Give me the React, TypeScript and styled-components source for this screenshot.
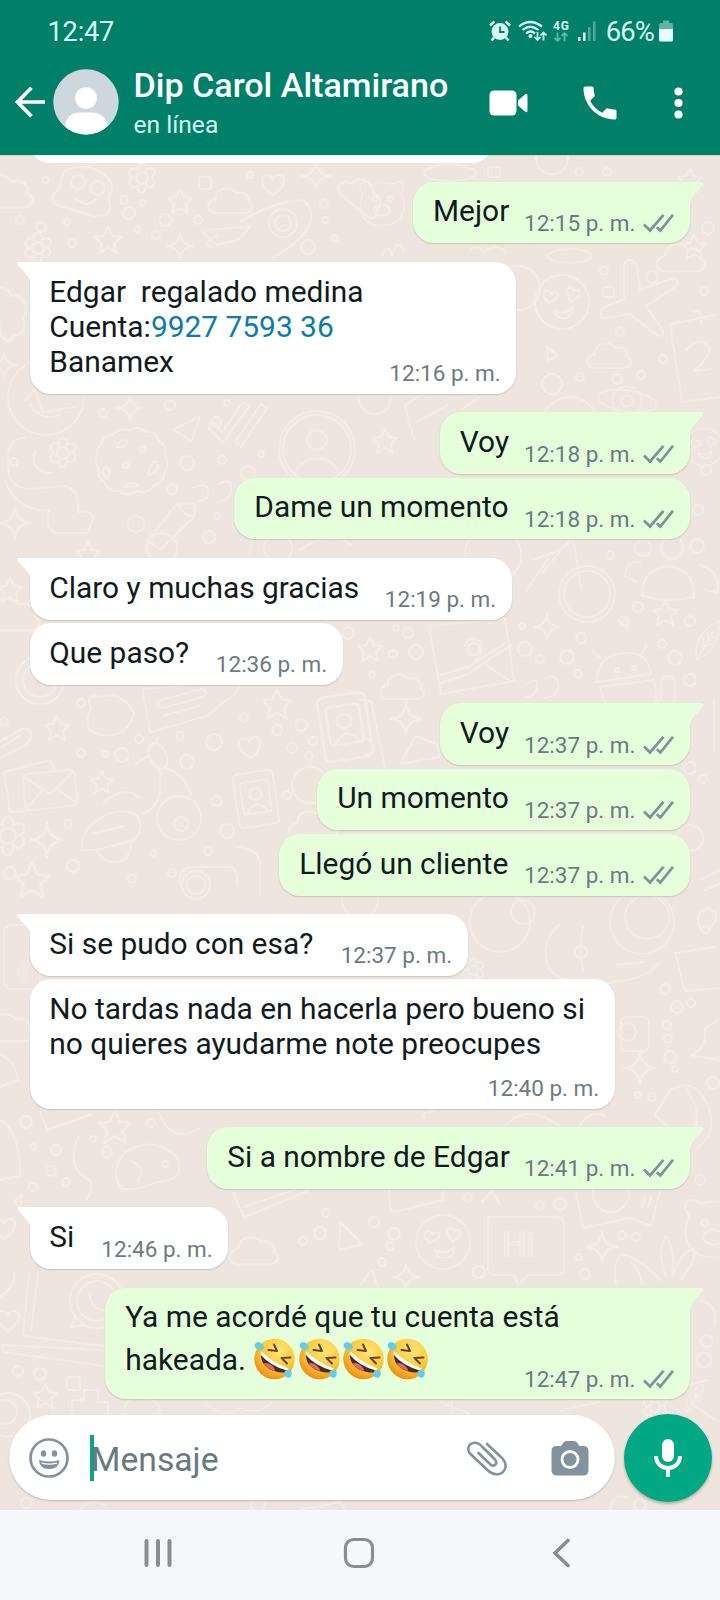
import React from "react";
import styled, { createGlobalStyle } from "styled-components";

const GlobalStyle = createGlobalStyle`
  * { box-sizing: border-box; }
  html, body { margin: 0; padding: 0; }
  body { font-family: Roboto, "Noto Sans", sans-serif; background: #eee6de; }
  svg { display: block; flex: none; }
`;

const Screen = styled.div`
  width: 720px;
  height: 1600px;
  display: flex;
  flex-direction: column;
  overflow: hidden;
`;

const Header = styled.header`
  height: 155px;
  flex: none;
  background: #008069;
  color: #fff;
  position: relative;
  z-index: 2;
  box-shadow: 0 1px 1px rgba(0, 0, 0, 0.08);
`;

const StatusBar = styled.div`
  height: 62px;
  padding: 0 46px 0 47.5px;
  display: flex;
  justify-content: space-between;
  align-items: center;
  color: #d6fbf0;
`;

const Clock = styled.span`
  font-size: 27.2px;
  line-height: 32px;
  letter-spacing: -0.2px;
  padding-top: 1px;
`;

const StatusIcons = styled.div`
  display: flex;
  align-items: center;
`;

const BatteryText = styled.span`
  font-size: 27.4px;
  line-height: 32px;
  letter-spacing: -0.9px;
  margin-left: 9.5px;
  margin-right: 4px;
  padding-top: 1px;
`;

const AppBar = styled.div`
  height: 80px;
  display: flex;
  align-items: center;
  padding: 0 31px 0 14px;
`;

const Identity = styled.div`
  flex: 1;
  margin-left: 15px;
  height: 80px;
  padding-top: 1.5px;
  white-space: nowrap;
`;

const ContactName = styled.div`
  font-size: 34.1px;
  font-weight: 500;
  line-height: 42px;
`;

const Presence = styled.div`
  font-size: 24.6px;
  line-height: 32px;
  margin-top: 3px;
  color: #d5f6ec;
`;

const Actions = styled.div`
  display: flex;
  align-items: center;
`;

const Chat = styled.main`
  position: relative;
  flex: 1;
  background: #eee6de;
  display: flex;
  flex-direction: column;
  overflow: hidden;
`;

const Wallpaper = styled.svg`
  position: absolute;
  inset: 0;
`;

const PreviousBubble = styled.div`
  position: relative;
  flex: none;
  width: 462px;
  height: 8.3px;
  margin-left: 30.3px;
  overflow: hidden;
  &::after {
    content: "";
    display: block;
    height: 60px;
    margin-top: -52px;
    border-radius: 20px;
    background: #fff;
  }
`;

const Row = styled.div<{ $out?: boolean; $first?: boolean }>`
  position: relative;
  flex: none;
  display: flex;
  justify-content: ${(p) => (p.$out ? "flex-end" : "flex-start")};
  padding: 0 30px 0 30.3px;
  margin-top: ${(p) => (p.$first ? 18.5 : 3.6)}px;
`;

const Bubble = styled.div<{ $out?: boolean; $first?: boolean; $w: number; $h: number }>`
  position: relative;
  width: ${(p) => p.$w}px;
  height: ${(p) => p.$h}px;
  display: flex;
  padding: 11.6px ${(p) => (p.$out ? "16px 0 20px" : "15.5px 0 19px")};
  background: ${(p) => (p.$out ? "#e5ffdb" : "#ffffff")};
  border-radius: ${(p) =>
    !p.$first ? "21px" : p.$out ? "21px 0 21px 21px" : "0 21px 21px 21px"};
  box-shadow: 0 1px 1.5px rgba(60, 50, 40, 0.2);
`;

const Tail = styled.svg<{ $out?: boolean }>`
  position: absolute;
  top: 0;
  ${(p) => (p.$out ? "right: -13.5px;" : "left: -13.5px; transform: scaleX(-1);")}
`;

const Body = styled.div`
  font-size: 29.9px;
  line-height: 35.3px;
  color: #101b20;
  white-space: pre;
`;

const EmojiLine = styled.div`
  display: flex;
  align-items: center;
  height: 49.5px;
  line-height: 49px;
`;

const PhoneLink = styled.span`
  color: #0b7bb0;
`;

const Meta = styled.div`
  flex: 1;
  width: 0;
  align-self: flex-end;
  display: flex;
  justify-content: flex-end;
  align-items: center;
  height: 26px;
  margin-bottom: 7.5px;
`;

const Time = styled.span`
  font-size: 22.5px;
  line-height: 26px;
  color: #6c7b83;
  white-space: nowrap;
  flex: none;
`;

const Composer = styled.div`
  position: relative;
  flex: none;
  margin-top: auto;
  height: 96px;
  padding: 0 8px 8px 9px;
  display: flex;
  align-items: center;
  justify-content: space-between;
`;

const InputPill = styled.div`
  width: 606px;
  height: 85px;
  margin-bottom: 1px;
  border-radius: 43px;
  background: #fff;
  display: flex;
  align-items: center;
  padding: 0 25px 0 20px;
  box-shadow: 0 1px 2px rgba(60, 50, 40, 0.25);
`;

const Caret = styled.span`
  width: 4px;
  height: 46px;
  margin-left: 21px;
  margin-right: -3px;
  background: #12a184;
`;

const Placeholder = styled.span`
  flex: 1;
  font-size: 33.7px;
  line-height: 40px;
  color: #687982;
  padding-top: 4px;
`;

const MicButton = styled.div`
  width: 88px;
  height: 88px;
  border-radius: 50%;
  background: #00a884;
  display: flex;
  align-items: center;
  justify-content: center;
  box-shadow: 0 2px 3px rgba(40, 40, 30, 0.3);
`;

const NavBar = styled.nav`
  height: 90px;
  flex: none;
  background: #f5f7fa;
  display: flex;
  align-items: center;
  padding: 0 149.5px 4px 142px;
`;

/* ---------- wallpaper doodles ---------- */

type P = { x: number; y: number; s?: number; r?: number };
const at = ({ x, y, s = 1, r = 0 }: P) => `translate(${x} ${y}) rotate(${r}) scale(${s})`;

const Star = (p: P) => (
  <path transform={at(p)} d="M0-12 4-4 12-3 6 3 8 12 0 7-8 12-6 3-12-3-4-4Z" />
);
const Spark = (p: P) => (
  <path transform={at(p)} d="M0-13Q1-1 13 0 1 1 0 13-1 1-13 0-1-1 0-13Z" />
);
const Heart = (p: P) => (
  <path transform={at(p)} d="M0 11C-14 2-13-9-6-9-2-9 0-6 0-4 0-6 3-10 7-9 14-7 12 3 0 11Z" />
);
const Cloud = (p: P) => (
  <path transform={at(p)} d="M-14 12C-26 12-25-1-15-2-16-13 0-16 5-8 14-11 20-3 17 1 25 5 20 12 13 12Z" />
);
const Flower = (p: P) => (
  <g transform={at(p)}>
    <circle r="6" />
    <path d="M-4-8C-6-17 6-17 4-8 11-14 17-4 9-1 17 4 9 13 4 7 5 17-6 17-4 8-11 13-17 3-9 0-17-4-10-14-4-8Z" />
  </g>
);
const Face = (p: P) => (
  <g transform={at(p)}>
    <circle r="27" />
    <path d="M-17-3C-22-13-11-13-10-7-7-12-1-9-5-4L-13 1ZM5-8C3-15 10-16 12-11 16-15 20-8 16-5L9 0ZM-8 8Q3 14 11 5 10 17 1 16-7 16-8 8Z" />
  </g>
);
const Envelope = (p: P) => (
  <g transform={at(p)}>
    <rect x="-26" y="-18" width="52" height="36" rx="4" />
    <path d="M-25-16 0 4 25-16M-25 16-7-1M25 16 7-1" />
  </g>
);
const Person = (p: P) => (
  <g transform={at(p)}>
    <circle r="38" />
    <circle r="34" />
    <circle cy="-9" r="10" />
    <path d="M-22 26C-18 4 18 4 22 26" />
  </g>
);
const Photo = (p: P) => (
  <g transform={at(p)}>
    <rect x="-20" y="-27" width="40" height="54" rx="5" />
    <rect x="-14" y="-18" width="28" height="32" rx="3" />
    <circle cy="-5" r="6" />
    <path d="M-10 13Q0-2 10 13" />
  </g>
);
const Ticks = (p: P) => (
  <path transform={at(p)} d="M-27 8-20 3-11 14 12-20 19-15-10 25ZM4 24 32-18 39-13 10 30Z" />
);
const Planet = (p: P) => (
  <g transform={at(p)}>
    <ellipse rx="42" ry="15" />
    <circle r="21" />
    <circle r="8" />
  </g>
);
const Cookie = (p: P) => (
  <g transform={at(p)}>
    <path d="M-35-2Q-37-12-31-16-29-26-20-26-12-34-3-31 8-36 14-29 25-30 27-20 36-15 33-5 38 5 32 12 32 23 22 24 15 34 5 30-5 37-13 30-25 31-27 21-36 15-33 7-38 2-35-2Z" />
    <path d="M-16-14Q-10-24-4-20-6-12-16-14ZM-30 12Q-28 2-22 10L-24 18ZM18 6Q24-4 26 4 24 14 16 14ZM-8 26Q0 18 7 25Z" />
    <circle cx="-6" cy="4" r="3" />
    <circle cx="11" cy="-12" r="3" />
  </g>
);
const Bear = (p: P) => (
  <g transform={at(p)}>
    <path d="M-24-12C-34-25-20-31-13-23Q0-28 13-23C21-31 34-24 24-12 36 20 15 28 0 28-18 28-34 18-24-12Z" />
    <circle cx="-9" cy="-5" r="3" />
    <circle cx="10" cy="-5" r="3" />
    <ellipse cy="9" rx="10" ry="7" />
  </g>
);
const Leaf = (p: P) => (
  <path transform={at(p)} d="M0 32C-18 12-13-12 0-32 14-10 16 13 0 32ZM0 28V-16M0 12-8 0M0 12 8 0M0 0-6-10M0 0 6-10" />
);
const Plane = (p: P) => (
  <path transform={at(p)} d="M-8-36Q0-44 5-32L8-9 38-20Q50-22 43-12L14 7 31 32Q33 40 23 35L-2 15-28 19Q-36 15-27 8L-8 0Z" />
);
const Book = (p: P) => (
  <g transform={at(p)}>
    <path d="M-50-20 42-28Q60-26 44-12L18 8-42 26Z" />
    <path d="M-32-8 12-20Q20-18 14-12L-28 0Q-38-2-32-8ZM-28 8 10-2" />
  </g>
);
const Rings = (p: P) => (
  <g transform={at(p)}>
    <circle r="28" />
    <circle r="23" />
    <path d="M-6-5-14-58M-14-58-44-22" />
  </g>
);
const Bubbles = (p: P) => (
  <g transform={at(p)}>
    <path d="M-38-26H30Q38-26 38-18V24Q38 32 30 32H2L-8 42-12 32H-30Q-38 32-38 24Z" />
  </g>
);

const dots: number[][] = [
  [46, 180, 3], [20, 220, 4], [41, 227, 5], [67, 222, 3], [72, 243, 4], [124, 200, 4], [143, 203, 3],
  [129, 213, 6], [137, 229, 3], [156, 235, 4], [165, 220, 6], [198, 220, 4], [250, 175, 3], [324, 204, 4],
  [325, 220, 3], [335, 238, 3], [308, 247, 7], [579, 172, 4], [607, 172, 4], [708, 228, 6], [604, 271, 4],
  [652, 277, 6], [704, 291, 4], [620, 332, 4], [663, 359, 4], [641, 375, 4], [617, 379, 5], [580, 377, 4],
  [552, 384, 10], [103, 413, 4], [170, 405, 5], [227, 403, 3], [216, 422, 5], [187, 463, 7], [222, 460, 4],
  [248, 473, 7], [172, 489, 5], [136, 524, 8], [217, 516, 3], [209, 537, 6], [261, 454, 3], [610, 555, 4],
  [638, 607, 5], [624, 621, 5], [690, 621, 5], [697, 546, 7], [396, 628, 3], [408, 633, 5], [393, 654, 4],
  [416, 652, 7], [522, 626, 3], [525, 649, 7], [540, 659, 4], [567, 657, 7], [578, 674, 4], [581, 638, 5],
  [662, 644, 4], [675, 658, 7], [690, 680, 6], [372, 675, 3], [348, 633, 6], [81, 703, 4], [81, 753, 4],
  [105, 754, 3], [122, 755, 7], [139, 739, 4], [180, 736, 4], [187, 762, 7], [214, 742, 8], [244, 718, 4],
  [277, 730, 5], [301, 725, 6], [292, 748, 5], [313, 741, 4], [309, 756, 4], [217, 801, 5], [287, 795, 4],
  [227, 831, 7], [68, 824, 4], [73, 866, 6], [153, 853, 3], [208, 851, 4], [132, 879, 4], [10, 873, 6],
  [172, 873, 4], [690, 768, 6], [703, 779, 4], [665, 989, 5], [677, 1007, 6], [691, 1003, 4],
  [667, 1025, 4], [668, 1039, 4], [670, 1057, 6], [675, 1069, 3], [652, 1097, 4], [638, 1095, 3],
  [26, 1122, 6], [33, 1147, 3], [56, 1150, 5], [51, 1171, 5], [66, 1182, 4], [33, 1187, 4],
  [93, 1139, 3], [107, 1152, 5], [151, 1123, 4], [326, 1213, 4], [320, 1233, 6], [303, 1241, 4],
  [374, 1222, 5], [394, 1234, 6], [390, 1246, 4], [382, 1262, 4], [479, 1272, 6], [540, 1206, 4],
  [560, 1204, 6], [468, 1198, 4], [622, 1235, 4], [636, 1237, 4], [579, 1257, 3], [585, 1274, 5],
  [18, 1371, 5], [40, 1374, 6], [707, 1341, 6], [704, 1360, 7], [26, 1503, 5], [640, 1505, 6], [258, 1505, 7],
  [706, 930, 4], [713, 1083, 6], [14, 462, 4], [4, 722, 4], [700, 1180, 5], [706, 470, 5], [698, 510, 5],
];

const Doodles = () => (
  <Wallpaper
    width="720"
    height="1355"
    viewBox="0 155 720 1355"
    fill="none"
    stroke="#f3ece5"
    strokeWidth="1.9"
    strokeLinejoin="round"
    strokeLinecap="round"
  >
    {dots.map(([x, y, r], i) => (
      <circle key={i} cx={x} cy={y} r={r} />
    ))}
    <Cloud x={5} y={192} s={1.3} />
    <path d="M64 171Q85 162 102 173 118 184 108 198 116 217 94 216L59 206Q45 198 59 190Z" />
    <circle cx="78" cy="182" r="7" /><circle cx="98" cy="188" r="7" />
    <path d="M76 199Q87 209 96 199" />
    <Flower x={142} y={178} /><rect x="199" y="177" width="12" height="12" rx="2" />
    <Heart x={273} y={184} /><Spark x={316} y={176} s={1.1} /><Star x={180} y={201} />
    <Cloud x={231} y={201} />
    <path d="M240 222Q270 203 299 200 315 203 310 224 300 243 272 258M217 236Q200 244 214 248" />
    <circle cx="283" cy="223" r="14" /><circle cx="283" cy="223" r="8" />
    <path d="M201 231 251 226 238 240 217 245Z" /><Star x={108} y={240} s={1.1} /><Spark x={180} y={246} />
    <Flower x={38} y={248} /><Cloud x={363} y={196} s={1.1} r={40} />
    <Bear x={382} y={203} s={0.8} /><circle cx="552" cy="158" r="16" /><ellipse cx="450" cy="173" rx="26" ry="8" />
    <rect x="488" y="167" width="12" height="10" rx="2" /><Star x={690} y={180} /><Star x={694} y={247} />
    <path d="M382 256Q388 240 392 256 397 236 404 251M470 250Q478 243 484 252 495 242 506 252" />
    <Face x={562} y={302} /><Plane x={632} y={299} /><ellipse cx="570" cy="256" rx="22" ry="7" />
    <rect x="603" y="287" width="11" height="10" rx="2" />
    <Cloud x={610} y={356} /><path d="M547 346 558 356 548 361Z" /><Cloud x={682} y={258} s={1.1} />
    <path d="M670 324 716 315M670 324 682 402 719 397M693 313Q701 305 701 323" />
    <path d="M686 350Q700 334 710 349 707 360 694 371L711 369" />
    <Planet x={627} y={401} s={0.7} r={8} /><circle cx="518" cy="288" r="22" />
    <path d="M405 405 414 440M405 405Q440 380 480 397L462 409M417 422 448 405" />
    <Star x={385} y={441} /><Face x={704} y={447} s={0.7} /><circle cx="570" cy="425" r="28" />
    <circle cx="375" cy="398" r="16" />

    <Cloud x={12} y={314} s={1.2} r={80} /><circle cx="46" cy="397" r="38" /><path d="M25 400 35 389 43 412 74 407M30 404Q40 422 60 415" />
    <Spark x={130} y={408} /><Spark x={4} y={365} /><path d="M173 430 200 416 192 441Z" />
    <Ticks x={232} y={420} s={0.9} /><Person x={317} y={449} />
    <Cookie x={132} y={461} />
    <Flower x={63} y={453} /><path d="M25 438Q5 437 8 470 10 489 31 489L65 486Q80 490 78 512 102 508 87 533H57Q45 531 49 511 15 510 5 480M35 451Q28 471 52 473" />
    <path d="M193 488Q210 480 208 494 209 500 198 501M218 484Q235 476 230 495 226 501 217 502" />
    <path d="M147 541 178 503 195 504 194 517 161 549ZM178 503Q183 516 194 517" />
    <Spark x={15} y={523} s={1.2} /><Star x={88} y={554} /><Cloud x={12} y={615} s={1.3} />
    <circle cx="162" cy="548" r="15" /><circle cx="278" cy="548" r="14" /><path d="M250 553Q252 530 265 520M300 550Q326 530 352 545" />
    <Star x={10} y={590} />

    <circle cx="40" cy="680" r="24" /><circle cx="40" cy="680" r="17" />
    <Star x={57} y={728} /><Book x={190} y={708} s={0.95} /><Star x={277} y={704} s={1.2} />
    <path d="M91 708Q84 692 101 697 124 691 134 714 126 738 104 735 80 734 91 708Z" />
    <path d="M0 741 24 728Q38 732 26 745L0 758M2 747 21 735" />
    <Heart x={250} y={747} r={-8} /><Envelope x={50} y={790} r={-6} /><path d="M27 811 10 812 4 772 50 760 54 768" />
    <Star x={102} y={782} s={0.9} /><Photo x={256} y={799} r={-8} /><Photo x={345} y={727} s={1.2} r={-9} />
    <path d="M82 850Q80 832 97 820 118 806 136 815 146 826 134 840 112 846 96 850ZM92 834 124 826M96 850Q108 868 124 860 134 850 130 840" />
    <circle cx="179" cy="818" r="22" /><circle cx="181" cy="824" r="7" />
    <ellipse cx="158" cy="756" rx="8" ry="14" transform="rotate(-25 158 756)" />
    <path d="M159 769Q166 803 143 814M164 768Q185 773 191 795M150 755 134 765M158 738 151 748M102 804Q125 783 139 798" />
    <Spark x={47} y={840} s={1.3} /><Flower x={8} y={836} s={1.3} /><Star x={32} y={880} s={1.4} />
    <circle cx="196" cy="885" r="14" /><circle cx="196" cy="885" r="9" /><path d="M180 885Q177 866 196 867H230Q238 868 237 885M238 847Q258 849 260 862V895" />
    <circle cx="310" cy="785" r="18" /><Cloud x={314} y={825} s={1.1} />

    <Rings x={587} y={594} /><circle cx="493" cy="555" r="28" /><path d="M527 590 548 559M533 560 560 550 573 541" />
    <path d="M642 595Q643 566 671 566 695 571 694 597 666 604 642 595ZM641 563Q628 557 625 576L637 582M700 565Q721 571 717 593L705 590" />
    <circle cx="672" cy="548" r="11" /><circle cx="643" cy="548" r="8" />
    <Star x={665} y={613} /><Spark x={547} y={627} /><path d="M620 622 628 618 627 628Z" />
    <path d="M429 626 505 618 514 681 441 694ZM439 684 468 674 511 645M440 675 470 666 505 643" />
    <circle cx="474" cy="649" r="6" /><path d="M465 646Q467 636 480 641 485 651 475 662M486 665 510 681" />
    <path d="M596 680Q599 655 622 653 647 650 651 674L596 682M601 658 592 651M641 654 646 646M600 687 654 680 657 704M600 687 605 704" />
    <circle cx="617" cy="670" r="2" /><circle cx="634" cy="668" r="2" /><rect x="661" y="676" width="14" height="30" rx="7" />
    <Star x={370} y={649} /><Cloud x={403} y={687} /><path d="M526 684Q541 675 536 690 534 697 526 697M544 678Q560 672 558 690 554 697 544 698" />
    <path d="M360 700 371 701 385 768M366 738Q381 747 366 755" /><Spark x={406} y={719} s={1.2} /><path d="M400 764 416 736 437 744 440 757Z" />
    <Leaf x={708} y={640} s={0.7} r={30} /><path d="M714 700V750M700 880 720 870M705 890 720 884" />
    <circle cx="690" cy="838" r="13" />

    <circle cx="500" cy="922" r="30" /><circle cx="523" cy="912" r="12" /><circle cx="642" cy="922" r="32" />
    <circle cx="647" cy="917" r="22" /><path d="M704 934Q690 913 708 908 726 914 704 934ZM675 953 715 947M675 953 685 991 720 988" />
    <path d="M559 925Q539 942 549 969 570 990 614 982 649 978 659 963M583 927Q578 950 583 970M616 965 643 962" />
    <circle cx="581" cy="952" r="6" /><rect x="621" y="1017" width="28" height="34" rx="5" /><circle cx="627" cy="1032" r="9" />
    <Spark x={640} y={1068} s={1.2} /><path d="M690 1055Q707 1050 705 1029L718 1020M690 1055 720 1060" />
    <path d="M670 1090Q700 1074 711 1116 714 1137 697 1148M670 1090 655 1115 668 1127M687 1090Q700 1110 696 1127" />
    <path d="M425 1118Q420 1111 435 1111M505 1126Q520 1110 538 1115 555 1121 560 1127M580 1126Q590 1108 605 1116" />
    <Flower x={473} y={970} s={0.8} /><circle cx="360" cy="900" r="18" />

    <rect x="4" y="925" width="36" height="64" rx="8" /><Leaf x={23} y={972} s={0.35} /><Cloud x={10} y={1028} s={1.1} />
    <path d="M0 1055Q15 1060 18 1080L0 1087M0 1120Q20 1130 20 1176L0 1180" />
    <path d="M40 1112 47 1130 92 1114M159 1112Q170 1145 200 1128" />
    <Star x={115} y={1127} s={1.3} /><path d="M78 1137Q65 1170 90 1180 95 1188 86 1200M125 1152Q154 1135 177 1157 187 1180 157 1182 140 1190 122 1189 108 1173 125 1152ZM130 1161Q148 1168 137 1182" />
    <circle cx="165" cy="1164" r="3" /><path d="M233 1193 244 1217 308 1191M244 1207 300 1188" /><path d="M340 1222 362 1244 339 1250Z" />
    <Cloud x={255} y={1251} s={1.1} /><Heart x={4} y={1228} /><path d="M15 1200 22 1195 20 1211Z" />

    <Face x={443} y={1242} /><Bubbles x={526} y={1243} />
    <text x="502" y="1256" fontSize="34" fontFamily="Roboto, sans-serif" strokeWidth="1.6">Hi</text>
    <Spark x={602} y={1247} s={1.2} /><Bear x={714} y={1228} s={1.05} />
    <path d="M389 1190 390 1207Q391 1213 397 1211L443 1200V1191M576 1192 583 1228 630 1218 651 1226 660 1191" />
    <circle cx="611" cy="1194" r="18" /><path d="M482 1202 492 1191 500 1204M642 1207 645 1198M648 1207 651 1198" />
    <path d="M666 1277Q656 1250 666 1236 676 1250 672 1277M672 1277Q680 1252 695 1248 694 1266 680 1280M660 1280Q640 1258 622 1254 612 1262 616 1284M630 1262Q640 1268 642 1284" />
    <Spark x={406} y={1277} /><path d="M360 1285 372 1270 378 1287" />

    <path d="M29 1272 23 1336 104 1346M38 1272 31 1331M0 1297Q18 1284 14 1272M2 1345 3 1352 104 1366M2 1345 104 1350" />
    <circle cx="97" cy="1301" r="27" /><circle cx="97" cy="1301" r="20" /><path d="M75 1317 71 1327 85 1325M90 1295Q91 1309 104 1310" />
    <rect x="67" y="1377" width="13" height="13" rx="2" /><Star x={45} y={1396} /><circle cx="8" cy="1415" r="22" /><circle cx="5" cy="1412" r="12" />
    <path d="M72 1414V1400H84V1390H98V1402H108V1414M125 1414Q122 1399 141 1397 161 1400 160 1414" />
    <path d="M205 1402Q220 1420 240 1408 258 1416 272 1402M440 1402 470 1414M452 1401V1414M560 1410 600 1402" />
    <Flower x={655} y={1407} s={0.9} /><path d="M690 1403 715 1420M660 1392 708 1380M700 1300Q719 1306 715 1324" />
    <Leaf x={695} y={1398} s={0.5} r={30} /><Heart x={8} y={1320} />
    <path d="M80 1510Q90 1497 105 1505M300 1510 340 1502 345 1510M610 1510Q614 1491 628 1498" />
  </Wallpaper>
);

/* ---------- icons ---------- */

const TickMarks = styled.svg`
  margin-left: 7.5px;
`;

const DeliveredTicks = () => (
  <TickMarks width="31" height="20" viewBox="0 0 31 20" fill="none" stroke="#82929b" strokeWidth="2.7">
    <path d="M1 11.5 7 17.5 20.5 1.8M13.8 14.3 17.3 17.5 30 1.8" />
  </TickMarks>
);

const Laugh = () => (
  <svg width="44.3" height="42" viewBox="0 0 44.3 42">
    <defs>
      <radialGradient id="skin" cx="0.62" cy="0.3" r="0.75">
        <stop offset="0" stopColor="#ffe57a" />
        <stop offset="0.55" stopColor="#fdcb3a" />
        <stop offset="1" stopColor="#ee8a12" />
      </radialGradient>
    </defs>
    <circle cx="21.5" cy="21" r="20.2" fill="url(#skin)" />
    <path d="M8 15C7 27 17 35 33 34.500Q36 33.500 34 30.500 18 26 8 15Z" fill="#4b2a20" />
    <path d="M10.500 25.500Q15 24 19.500 28 22 30.500 22 33 14 31 10.500 25.500Z" fill="#e0685f" />
    <path d="M8.500 13.500Q20 25 35.500 30.500 36 32 34 32.500 17 28 8 17 7 14.500 8.500 13.500Z" fill="#fff" />
    <path d="M21 6.500 24 13 15.500 12M37.500 19.500 28.500 20 34 25.500" fill="none" stroke="#6b4216" strokeWidth="2" strokeLinecap="round" strokeLinejoin="round" />
    <path d="M11 9Q9 4.500 5 4 1.500 4.500 1.500 8 3 12 7 12 11 12 11 9Z" fill="#67cde6" />
    <path d="M32 33Q35 30.500 38.500 33 39.500 37 37 39.500 33.500 40.500 31.500 37.500 31 35 32 33Z" fill="#67cde6" />
  </svg>
);

const AvatarSvg = styled.svg`
  margin-left: 6.5px;
`;
const VideoIcon = styled.svg`
  margin-top: 2px;
`;
const PhoneIcon = styled.svg`
  margin-left: 49.5px;
  margin-top: 2px;
`;
const MoreIcon = styled.svg`
  margin-left: 46.5px;
  margin-top: 1px;
`;
const StatusGlyph = styled.svg<{ $gap: number }>`
  margin-left: ${(p) => p.$gap}px;
`;
const ClipIcon = styled.svg`
  margin-right: 42px;
`;
const HomeIcon = styled.svg`
  margin-left: 169px;
`;
const BackIcon = styled.svg`
  margin-left: auto;
`;

/* ---------- conversation ---------- */

type Message = {
  out?: boolean;
  first?: boolean;
  w: number;
  h?: number;
  time: string;
  text: React.ReactNode;
};

const messages: Message[] = [
  { out: true, first: true, w: 277, time: "12:15 p. m.", text: "Mejor" },
  {
    first: true, w: 486, h: 132, time: "12:16 p. m.",
    text: (
      <>
        <div>{"Edgar  regalado medina"}</div>
        <div>Cuenta:<PhoneLink>9927 7593 36</PhoneLink></div>
        <div>Banamex</div>
      </>
    ),
  },
  { out: true, first: true, w: 250.3, time: "12:18 p. m.", text: "Voy" },
  { out: true, w: 455.7, time: "12:18 p. m.", text: "Dame un momento" },
  { first: true, w: 481.5, time: "12:19 p. m.", text: "Claro y muchas gracias" },
  { w: 312.5, time: "12:36 p. m.", text: "Que paso?" },
  { out: true, first: true, w: 250.3, time: "12:37 p. m.", text: "Voy" },
  { out: true, w: 372.8, time: "12:37 p. m.", text: "Un momento" },
  { out: true, w: 410.8, time: "12:37 p. m.", text: "Llegó un cliente" },
  { first: true, w: 437.3, time: "12:37 p. m.", text: "Si se pudo con esa?" },
  { w: 584.5, h: 129.2, time: "12:40 p. m.", text: "No tardas nada en hacerla pero bueno si\nno quieres ayudarme note preocupes" },
  { out: true, first: true, w: 482.8, time: "12:41 p. m.", text: "Si a nombre de Edgar" },
  { first: true, w: 198, time: "12:46 p. m.", text: "Si" },
  {
    out: true, first: true, w: 584.8, h: 111.5, time: "12:47 p. m.",
    text: (
      <>
        <div>Ya me acordé que tu cuenta está</div>
        <EmojiLine>{"hakeada. "}<Laugh /><Laugh /><Laugh /><Laugh /></EmojiLine>
      </>
    ),
  },
];

export default function App() {
  return (
    <Screen>
      <GlobalStyle />
      <Header>
        <StatusBar>
          <Clock>12:47</Clock>
          <StatusIcons>
            <svg width="22" height="22" viewBox="0 0 22 22" fill="none" stroke="#d6fbf0">
              <circle cx="11" cy="11.500" r="8.500" fill="#d6fbf0" stroke="none" />
              <path d="M11 6.500V12H15.500" stroke="#008069" strokeWidth="1.800" />
              <path d="M1 5.500 5.500 1.500M21 5.500 16.500 1.500" strokeWidth="2.400" />
              <path d="M5 17.500 2.500 20.500M17 17.500 19.500 20.500" strokeWidth="2.600" />
            </svg>
            <StatusGlyph $gap={7} width="29" height="22" viewBox="0 0 29 22" fill="none" stroke="#d6fbf0" strokeWidth="2.200">
              <path d="M1 6.500Q12-2.500 24 6.500M4.500 10Q12 3.500 20.500 10M8 13.500Q12.500 9.500 17 13.500" />
              <circle cx="12.500" cy="16" r="2" fill="#d6fbf0" stroke="none" />
              <path d="M19.500 12V19.500M16.500 17 19.500 20 22.500 17M25.500 20.500V13M22.500 15.500 25.500 12.500 28.500 15.500" strokeWidth="1.700" />
            </StatusGlyph>
            <StatusGlyph $gap={6} width="18" height="24" viewBox="0 0 18 24">
              <text x="0" y="11" fontSize="12" fontWeight="700" fontFamily="Roboto, sans-serif" fill="#d6fbf0" textLength="16">4G</text>
              <path d="M4.500 13.500V22M1.500 19 4.500 22 7.500 19M11.500 22.500V14M8.500 17 11.500 14 14.500 17" fill="none" stroke="#5fb3a2" strokeWidth="1.900" />
            </StatusGlyph>
            <StatusGlyph $gap={6} width="19" height="22" viewBox="0 0 19 22">
              <path d="M1 17H3.500V21H1ZM6 12.500H8.500V21H6Z" fill="#e4fff8" />
              <path d="M11 7H13.500V21H11ZM16 1.500H18.500V21H16Z" fill="#4fa896" />
            </StatusGlyph>
            <BatteryText>66%</BatteryText>
            <svg width="16" height="22" viewBox="0 0 16 22">
              <path d="M5 .5H11V3H13.500Q15 3 15 4.500V9H1V4.500Q1 3 2.500 3H5Z" fill="#62b3a2" />
              <path d="M1 9H15V20Q15 21.500 13.500 21.500H2.500Q1 21.500 1 20Z" fill="#e8fbf6" />
            </svg>
          </StatusIcons>
        </StatusBar>
        <AppBar>
          <svg width="32" height="32" viewBox="0 0 32 32" fill="none" stroke="#fff" strokeWidth="3.700">
            <path d="M17.500 1.800 3.500 16 17.500 30.200M3.500 16H31" />
          </svg>
          <AvatarSvg width="66" height="66" viewBox="0 0 66 66">
            <defs><clipPath id="avatar"><circle cx="33" cy="33" r="32.500" /></clipPath></defs>
            <circle cx="33" cy="33" r="32.700" fill="#ced7de" />
            <g fill="#fff" clipPath="url(#avatar)">
              <circle cx="33" cy="29" r="10.800" />
              <path d="M12 58Q13 44 27 43.500H39Q53 44 55 58L45 66H20Z" />
            </g>
          </AvatarSvg>
          <Identity>
            <ContactName>Dip Carol Altamirano</ContactName>
            <Presence>en línea</Presence>
          </Identity>
          <Actions>
            <VideoIcon width="39" height="26" viewBox="0 0 39 26" fill="#fff">
              <rect x="0.500" y="0.500" width="27" height="25" rx="4.500" />
              <path d="M29 10.500 36 4.500Q38.500 2.700 38.500 5.500V20.500Q38.500 23.300 36 21.500L29 15.500Z" />
            </VideoIcon>
            <PhoneIcon width="44" height="44" viewBox="0 0 24 24" fill="#fff">
              <path d="M6.620 10.790c1.440 2.830 3.760 5.140 6.590 6.590l2.200-2.200c.27-.27.67-.36 1.020-.24 1.120.37 2.330.57 3.570.57.55 0 1 .45 1 1V20c0 .55-.45 1-1 1-9.390 0-17-7.610-17-17 0-.55.45-1 1-1h3.500c.55 0 1 .45 1 1 0 1.250.2 2.450.57 3.570.11.35.03.74-.25 1.020l-2.200 2.200z" />
            </PhoneIcon>
            <MoreIcon width="21" height="34" viewBox="0 0 21 34" fill="#fff">
              <circle cx="10.500" cy="5.500" r="4.100" /><circle cx="10.500" cy="17" r="4.100" /><circle cx="10.500" cy="28.500" r="4.100" />
            </MoreIcon>
          </Actions>
        </AppBar>
      </Header>
      <Chat>
        <Doodles />
        <PreviousBubble />
        {messages.map((m, i) => (
          <Row key={i} $out={m.out} $first={m.first}>
            <Bubble $out={m.out} $first={m.first} $w={m.w} $h={m.h ?? 61.7}>
              {m.first && (
                <Tail $out={m.out} width="14" height="21" viewBox="0 0 14 21">
                  <path d="M0 0H11.500Q14.200.4 13 3L2.500 15Q.5 17.500.5 21H0Z" fill={m.out ? "#e5ffdb" : "#fff"} />
                </Tail>
              )}
              <Body>{m.text}</Body>
              <Meta>
                <Time>{m.time}</Time>
                {m.out && <DeliveredTicks />}
              </Meta>
            </Bubble>
          </Row>
        ))}
        <Composer>
          <InputPill>
            <svg width="40" height="40" viewBox="0 0 40 40" fill="none" stroke="#82939d" strokeWidth="2.700">
              <circle cx="20" cy="20" r="18.500" />
              <ellipse cx="14.500" cy="15.500" rx="2.700" ry="3.300" fill="#82939d" stroke="none" />
              <ellipse cx="25.500" cy="15.500" rx="2.700" ry="3.300" fill="#82939d" stroke="none" />
              <path d="M10 22Q20 25 30.500 22 30 31 20.200 31T10 22Z" fill="#82939d" stroke="none" />
              <path d="M12.500 25.200Q20 27 28 25.200" stroke="#fff" strokeWidth="1.200" />
            </svg>
            <Caret />
            <Placeholder>Mensaje</Placeholder>
            <ClipIcon width="42" height="38" viewBox="0 0 42 38" fill="none" stroke="#82939d" strokeWidth="2.600" strokeLinecap="round">
              <path d="M12.500 14 24.500 25.500C28 28.500 32.500 24.500 29 20.500L16 7.500C8-1.500-2.500 7.500 4.500 15L22 31.500C33 41.500 45.500 30 36.500 19.500L21 5" />
            </ClipIcon>
            <svg width="40" height="38" viewBox="0 0 40 38">
              <path d="M7 7H11L13.500 3.500Q14.500 2 16.500 2H24Q26 2 27 3.500L29.500 7H33Q38.500 7 38.500 12V31Q38.500 36.500 33 36.500H7Q1.500 36.500 1.500 31V12Q1.500 7 7 7Z" fill="#82939d" />
              <circle cx="20" cy="20.500" r="8" fill="none" stroke="#fff" strokeWidth="2.800" />
            </svg>
          </InputPill>
          <MicButton>
            <svg width="30" height="40" viewBox="0 0 30 40" fill="none" stroke="#fff" strokeWidth="4">
              <rect x="9" y="1" width="12" height="23" rx="6" fill="#fff" stroke="none" />
              <path d="M3 18C3 34 27 34 27 18M15 30V39" />
            </svg>
          </MicButton>
        </Composer>
      </Chat>
      <NavBar>
        <svg width="32" height="30" viewBox="0 0 32 30" stroke="#8d8d8f" strokeWidth="4" strokeLinecap="round">
          <path d="M4.500 3V27M16 3V27M27.500 3V27" />
        </svg>
        <HomeIcon width="32" height="32" viewBox="0 0 32 32" fill="none" stroke="#8d8d8f" strokeWidth="3.200">
          <rect x="2.500" y="2.500" width="27" height="27" rx="8" />
        </HomeIcon>
        <BackIcon width="20" height="30" viewBox="0 0 20 30" fill="none" stroke="#8d8d8f" strokeWidth="3.600" strokeLinecap="round">
          <path d="M17 2.500 4 15 17 27.500" />
        </BackIcon>
      </NavBar>
    </Screen>
  );
}
